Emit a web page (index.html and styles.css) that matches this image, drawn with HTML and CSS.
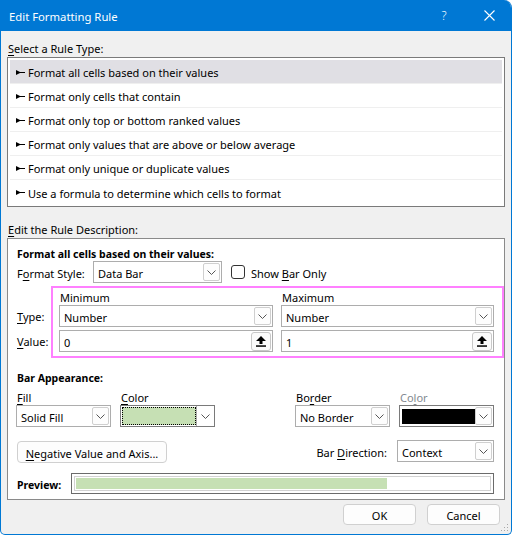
FILE: index.html
```html
<!DOCTYPE html>
<html>
<head>
<meta charset="utf-8">
<link rel="stylesheet" href="styles.css">
</head>
<body>
<div class="window">
  <div class="titlebar">
    <span class="title">Edit Formatting Rule</span>
    <span class="tb-btn help">?</span>
    <span class="tb-btn close"><svg width="11" height="11" viewBox="0 0 11 11"><path d="M0.5 0.5 L10.5 10.5 M10.5 0.5 L0.5 10.5" stroke="#fff" stroke-width="1.1" fill="none"/></svg></span>
  </div>
  <div class="body">
    <div class="label l-select"><u>S</u>elect a Rule Type:</div>
    <div class="listbox">
      <div class="item sel"><svg class="bullet" width="9" height="5" viewBox="0 0 9 5"><path d="M0 0 L0 5 L4 3 L9 3 L9 2 L4 2 Z" fill="#000"/></svg><span>Format all cells based on their values</span></div>
      <div class="item"><svg class="bullet" width="9" height="5" viewBox="0 0 9 5"><path d="M0 0 L0 5 L4 3 L9 3 L9 2 L4 2 Z" fill="#000"/></svg><span>Format only cells that contain</span></div>
      <div class="item"><svg class="bullet" width="9" height="5" viewBox="0 0 9 5"><path d="M0 0 L0 5 L4 3 L9 3 L9 2 L4 2 Z" fill="#000"/></svg><span>Format only top or bottom ranked values</span></div>
      <div class="item"><svg class="bullet" width="9" height="5" viewBox="0 0 9 5"><path d="M0 0 L0 5 L4 3 L9 3 L9 2 L4 2 Z" fill="#000"/></svg><span>Format only values that are above or below average</span></div>
      <div class="item"><svg class="bullet" width="9" height="5" viewBox="0 0 9 5"><path d="M0 0 L0 5 L4 3 L9 3 L9 2 L4 2 Z" fill="#000"/></svg><span>Format only unique or duplicate values</span></div>
      <div class="item last"><svg class="bullet" width="9" height="5" viewBox="0 0 9 5"><path d="M0 0 L0 5 L4 3 L9 3 L9 2 L4 2 Z" fill="#000"/></svg><span>Use a formula to determine which cells to format</span></div>
    </div>
    <div class="label l-edit"><u>E</u>dit the Rule Description:</div>
    <div class="group">
      <div class="bold head">Format all cells based on their values:</div>
      <div class="style-row">
        <span class="lbl-style">F<u>o</u>rmat Style:</span>
        <div class="combo w-style"><span class="ctext">Data Bar</span><span class="arrowbtn"><svg width="9" height="5" viewBox="0 0 9 5"><path d="M0.5 0.5 L4.5 4.5 L8.5 0.5" fill="none" stroke="#555" stroke-width="1"/></svg></span></div>
        <span class="check"><span class="box"></span><span class="check-text">Show <u>B</u>ar Only</span></span>
      </div>
      <div class="minmax">
        <div class="mm-labels"><div class="mm-lbl"><u>T</u>ype:</div><div class="mm-lbl"><u>V</u>alue:</div></div>
        <div class="pink">
          <div class="col col-min">
            <div class="colhead">Minimum</div>
            <div class="combo"><span class="ctext">Number</span><span class="arrowbtn"><svg width="9" height="5" viewBox="0 0 9 5"><path d="M0.5 0.5 L4.5 4.5 L8.5 0.5" fill="none" stroke="#555" stroke-width="1"/></svg></span></div>
            <div class="combo input"><span class="ctext">0</span><span class="upbtn"><svg width="10" height="11" viewBox="0 0 10 11"><path d="M5 0 L10 5 L6.5 5 L6.5 8 L3.5 8 L3.5 5 L0 5 Z" fill="#000"/><rect x="0" y="9.3" width="10" height="1.5" fill="#000"/></svg></span></div>
          </div>
          <div class="col col-max">
            <div class="colhead">Maximum</div>
            <div class="combo"><span class="ctext">Number</span><span class="arrowbtn"><svg width="9" height="5" viewBox="0 0 9 5"><path d="M0.5 0.5 L4.5 4.5 L8.5 0.5" fill="none" stroke="#555" stroke-width="1"/></svg></span></div>
            <div class="combo input"><span class="ctext">1</span><span class="upbtn"><svg width="10" height="11" viewBox="0 0 10 11"><path d="M5 0 L10 5 L6.5 5 L6.5 8 L3.5 8 L3.5 5 L0 5 Z" fill="#000"/><rect x="0" y="9.3" width="10" height="1.5" fill="#000"/></svg></span></div>
          </div>
        </div>
      </div>
      <div class="bold bar-app">Bar Appearance:</div>
      <div class="appearance">
        <div class="fld f-fill">
          <div class="fl-lbl"><u>F</u>ill</div>
          <div class="combo"><span class="ctext">Solid Fill</span><span class="arrowbtn"><svg width="9" height="5" viewBox="0 0 9 5"><path d="M0.5 0.5 L4.5 4.5 L8.5 0.5" fill="none" stroke="#555" stroke-width="1"/></svg></span></div>
        </div>
        <div class="fld f-color">
          <div class="fl-lbl"><u>C</u>olor</div>
          <div class="combo colorcombo"><span class="swatch green"></span><span class="sw-arrow"><svg width="9" height="5" viewBox="0 0 9 5"><path d="M0.5 0.5 L4.5 4.5 L8.5 0.5" fill="none" stroke="#555" stroke-width="1"/></svg></span></div>
        </div>
        <div class="fld f-border">
          <div class="fl-lbl">Bo<u>r</u>der</div>
          <div class="combo"><span class="ctext">No Border</span><span class="arrowbtn"><svg width="9" height="5" viewBox="0 0 9 5"><path d="M0.5 0.5 L4.5 4.5 L8.5 0.5" fill="none" stroke="#555" stroke-width="1"/></svg></span></div>
        </div>
        <div class="fld f-bcolor">
          <div class="fl-lbl disabled">Co<u>l</u>or</div>
          <div class="combo colorcombo"><span class="swatch black"></span><span class="arrowbtn"><svg width="9" height="5" viewBox="0 0 9 5"><path d="M0.5 0.5 L4.5 4.5 L8.5 0.5" fill="none" stroke="#555" stroke-width="1"/></svg></span></div>
        </div>
      </div>
      <div class="neg-row">
        <span class="btn neg"><span><u>N</u>egative Value and Axis...</span></span>
        <span class="spacer"></span>
        <span class="dir-lbl">Bar <u>D</u>irection:</span>
        <div class="combo w-ctx"><span class="ctext">Context</span><span class="arrowbtn"><svg width="9" height="5" viewBox="0 0 9 5"><path d="M0.5 0.5 L4.5 4.5 L8.5 0.5" fill="none" stroke="#555" stroke-width="1"/></svg></span></div>
      </div>
      <div class="preview-row">
        <span class="bold pv-lbl">Preview:</span>
        <div class="preview"><div class="pv-inner"><div class="pv-fill" style="width:75.3%"></div></div></div>
      </div>
    </div>
    <div class="footer">
      <span class="btn ok"><span>OK</span></span>
      <span class="btn cancel"><span>Cancel</span></span>
    </div>
  </div>
  <svg class="grip" width="8" height="8" viewBox="0 0 8 8"><g fill="#a8a8a8"><rect x="6" y="0" width="1" height="1"/><rect x="6" y="3" width="1" height="1"/><rect x="3" y="3" width="1" height="1"/><rect x="6" y="6" width="1" height="1"/><rect x="3" y="6" width="1" height="1"/><rect x="0" y="6" width="1" height="1"/></g></svg>
</div>
</body>
</html>
```

FILE: styles.css
```css
* { box-sizing: border-box; }
html, body { margin: 0; padding: 0; background: #ffffff; }
body {
  font-family: "Noto Sans", "Open Sans", sans-serif;
  font-size: 11px;
  color: #000;
}
u { text-decoration: underline; text-underline-offset: 2px; }

.window {
  position: relative;
  width: 512px;
  height: 535px;
  border: 1px solid #0078d4;
  border-top: none;
  border-radius: 0 8px 5px 5px;
  background: #f0f0f0;
  overflow: hidden;
  display: flex;
  flex-direction: column;
}
.titlebar {
  height: 31px;
  margin: 0 -1px;
  background: #0078d4;
  color: #fff;
  display: flex;
  align-items: center;
  flex: none;
}
.title { padding-left: 9px; flex: 1; font-size: 11.3px; padding-top: 1px; }
.tb-btn {
  width: 46px;
  height: 31px;
  display: flex;
  align-items: center;
  justify-content: center;
}
.help { font-size: 12px; margin-right: -1px; font-weight: 300; }
.close svg { display: block; }

.body {
  padding: 0 6px;
  flex: 1;
  display: flex;
  flex-direction: column;
}
.label { height: 16px; line-height: 18px; white-space: nowrap; }
.l-select { margin-top: 9px; padding-left: 1px; }
.listbox {
  margin-top: 1px;
  border: 1px solid #7a7a7a;
  background: #fff;
  padding: 2px;
}
.item {
  height: 24px;
  border-bottom: 1px solid #efefef;
  display: flex;
  align-items: center;
  white-space: nowrap;
}
.item span { padding-top: 2px; }
.item.last { border-bottom: none; }
.item.sel { background: #e0dfe4; }
.bullet { margin-left: 6px; margin-right: 3px; flex: none; margin-top: 1px; }

.l-edit { margin-top: 14px; padding-left: 1px; }
.group {
  margin-top: 1px;
  border: 1px solid #8a8a8a;
  background: #fff;
  padding: 6px 0 5px 9px;
  height: 262px;
}
.bold { font-weight: bold; font-size: 10.5px; }
.head { height: 16px; line-height: 18px; }

.style-row { display: flex; align-items: center; height: 22px; }
.lbl-style { width: 76px; flex: none; padding-top: 2px; }
.combo {
  height: 22px;
  border: 1px solid #adadad;
  background: #fff;
  display: flex;
  align-items: center;
  justify-content: space-between;
  padding: 0 1px 0 4px;
}
.ctext { white-space: nowrap; padding-top: 2px; }
.arrowbtn {
  width: 17px;
  height: 18px;
  border: 1px solid #cfcfcf;
  border-radius: 2px;
  background: #fdfdfd;
  display: flex;
  align-items: center;
  justify-content: center;
  flex: none;
}
.arrowbtn svg, .sw-arrow svg, .upbtn svg { display: block; }
.w-style { width: 129px; }
.check { display: flex; align-items: center; margin-left: 9px; white-space: nowrap; }
.check-text { padding-top: 2px; }
.box {
  width: 14px;
  height: 14px;
  border: 1px solid #333;
  border-radius: 3px;
  margin-right: 6px;
  background: #fff;
}

.minmax { display: flex; margin-top: 3px; margin-left: -9px; padding-left: 9px; }
.mm-labels { width: 34px; padding-top: 19px; flex: none; }
.mm-lbl { height: 22px; line-height: 24px; margin-bottom: 3px; }
.pink {
  width: 453px;
  border: 2px solid #ff80ff;
  display: flex;
  gap: 8px;
  padding: 1px 8px 4px 6px;
}
.col { display: flex; flex-direction: column; }
.col-min { width: 214px; }
.col-max { width: 213px; }
.colhead { height: 16px; line-height: 18px; padding-left: 1px; }
.input { margin-top: 3px; }
.upbtn {
  width: 20px;
  height: 19px;
  border: 1px solid #c8c8c8;
  border-radius: 3px;
  background: #fbfbfb;
  display: flex;
  align-items: center;
  justify-content: center;
}

.bar-app { margin-top: 11px; height: 16px; line-height: 18px; }
.appearance { display: flex; margin-top: 4px; margin-left: -1px; }
.fld { width: 95px; flex: none; }
.fl-lbl { height: 16px; line-height: 18px; padding-left: 1px; }
.fl-lbl.disabled { color: #838a91; }
.f-color { margin-left: 9px; }
.f-border { margin-left: 80px; }
.f-bcolor { margin-left: 9px; }
.colorcombo { padding: 1px; border-color: #7a7a7a; }
.swatch { display: block; height: 18px; }
.swatch.green {
  width: 75px;
  background: #c6e0b4;
  outline: 1px dotted #000;
  outline-offset: -1px;
}
.swatch.black { width: 73px; background: #000; height: 15px; margin-left: 1px; }
.sw-arrow {
  width: 18px;
  height: 20px;
  margin-right: -1px;
  border-left: 1px solid #adadad;
  display: flex;
  align-items: center;
  justify-content: center;
}

.neg-row { display: flex; align-items: flex-start; margin-top: 13px; height: 23px; padding-right: 10px; }
.btn {
  display: flex;
  align-items: center;
  justify-content: center;
  background: #fdfdfd;
  border: 1px solid #d0d0d0;
  border-radius: 4px;
  white-space: nowrap;
}
.btn span { padding-top: 2px; }
.neg { width: 150px; height: 22px; margin-top: 1px; }
.spacer { flex: 1; }
.dir-lbl { line-height: 24px; margin-right: 10px; margin-top: 1px; }
.w-ctx { width: 97px; }

.preview-row { display: flex; align-items: center; margin-top: 10px; height: 21px; }
.pv-lbl { width: 54px; flex: none; padding-top: 2px; }
.preview {
  width: 423px;
  height: 21px;
  border: 1px solid #6b6b6b;
  background: #fff;
  padding: 2px;
}
.pv-inner { height: 15px; border: 1px solid #d2d2d2; padding: 1px 1px; }
.pv-fill { height: 11px; background: #c6e0b4; }

.footer { display: flex; justify-content: flex-end; gap: 11px; margin-top: 4px; padding-right: 5px; }
.ok, .cancel { width: 73px; height: 21px; }

.grip { position: absolute; right: 2px; bottom: 2px; }
```
